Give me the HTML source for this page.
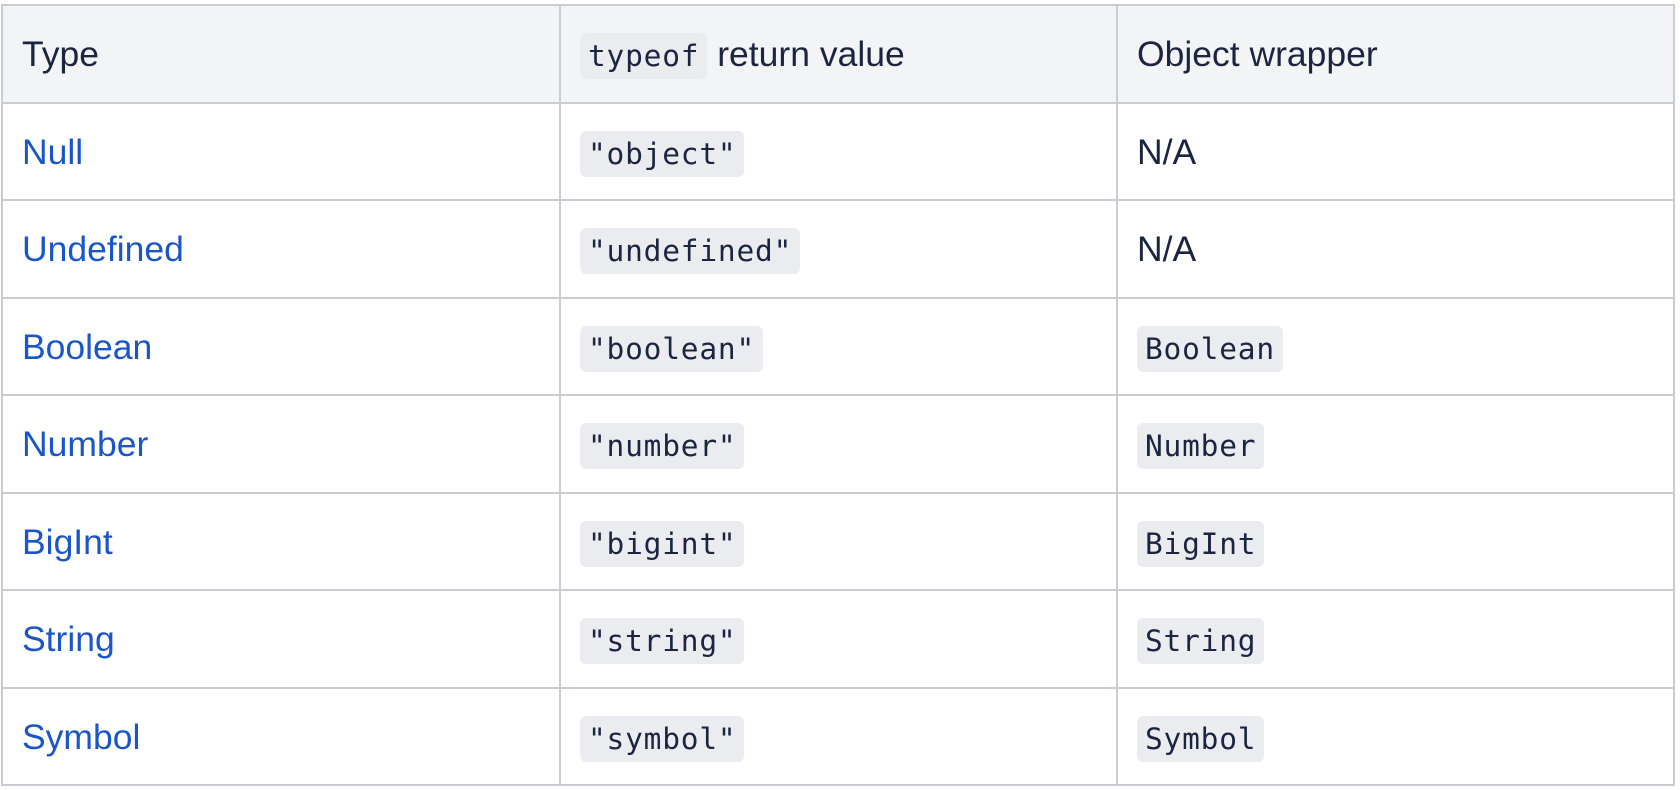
<!DOCTYPE html>
<html><head><meta charset="utf-8"><style>
html,body{margin:0;padding:0;background:#fff;width:1680px;height:790px;overflow:hidden}
table{position:absolute;left:1px;top:4px;border-collapse:collapse;font-family:"Liberation Sans",sans-serif;font-size:35.5px;color:#1b2540}
td,th{border:2px solid #c9ccd3;padding:2px 0 0 19px;height:93.5px;text-align:left;font-weight:normal;vertical-align:middle}
th{background:#f3f4f6}
a{color:#1a56c9;text-decoration:none}
code{font-family:"DejaVu Sans Mono","Liberation Mono",monospace;font-size:29.5px;background:#eaecf0;border-radius:6px;padding:6px 8px;color:#1b2540;letter-spacing:0.8px}
</style></head><body>
<table>
<colgroup><col style="width:558px"><col style="width:557px"><col style="width:557px"></colgroup>
<tr><th>Type</th><th><code>typeof</code> return value</th><th>Object wrapper</th></tr>
<tr><td><a>Null</a></td><td><code>"object"</code></td><td>N/A</td></tr>
<tr><td><a>Undefined</a></td><td><code>"undefined"</code></td><td>N/A</td></tr>
<tr><td><a>Boolean</a></td><td><code>"boolean"</code></td><td><code>Boolean</code></td></tr>
<tr><td><a>Number</a></td><td><code>"number"</code></td><td><code>Number</code></td></tr>
<tr><td><a>BigInt</a></td><td><code>"bigint"</code></td><td><code>BigInt</code></td></tr>
<tr><td><a>String</a></td><td><code>"string"</code></td><td><code>String</code></td></tr>
<tr><td><a>Symbol</a></td><td><code>"symbol"</code></td><td><code>Symbol</code></td></tr>
</table>
</body></html>
